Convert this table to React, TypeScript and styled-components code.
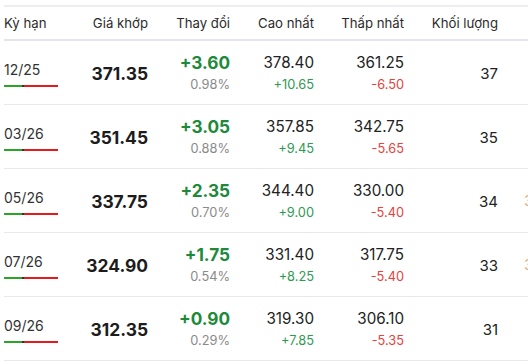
import styled, { createGlobalStyle } from "styled-components";

type Row = {
  term: string;
  price: string;
  change: string;
  pct: string;
  high: string;
  highDiff: string;
  low: string;
  lowDiff: string;
  volume: string;
  extra?: string;
};

const rows: Row[] = [
  { term: "12/25", price: "371.35", change: "+3.60", pct: "0.98%", high: "378.40", highDiff: "+10.65", low: "361.25", lowDiff: "-6.50", volume: "37" },
  { term: "03/26", price: "351.45", change: "+3.05", pct: "0.88%", high: "357.85", highDiff: "+9.45", low: "342.75", lowDiff: "-5.65", volume: "35" },
  { term: "05/26", price: "337.75", change: "+2.35", pct: "0.70%", high: "344.40", highDiff: "+9.00", low: "330.00", lowDiff: "-5.40", volume: "34", extra: "3" },
  { term: "07/26", price: "324.90", change: "+1.75", pct: "0.54%", high: "331.40", highDiff: "+8.25", low: "317.75", lowDiff: "-5.40", volume: "33", extra: "3" },
  { term: "09/26", price: "312.35", change: "+0.90", pct: "0.29%", high: "319.30", highDiff: "+7.85", low: "306.10", lowDiff: "-5.35", volume: "31" },
];

const GlobalStyle = createGlobalStyle`
  html, body {
    margin: 0;
    padding: 0;
    background: #ffffff;
    overflow: hidden;
  }
  body {
    font-family: Inter, "Noto Sans", sans-serif;
    color: #222;
  }
`;

const App = () => {
  return (
    <>
      <GlobalStyle />
      <Viewport>
        <Table>
          <HeadRow>
            <HeadCell $align="left">Kỳ hạn</HeadCell>
            <HeadCell>Giá khớp</HeadCell>
            <HeadCell>Thay đổi</HeadCell>
            <HeadCell>Cao nhất</HeadCell>
            <HeadCell>Thấp nhất</HeadCell>
            <HeadCell>Khối lượng</HeadCell>
            <HeadCell />
          </HeadRow>
          {rows.map((r) => (
            <BodyRow key={r.term}>
              <TermCell>
                <Term>{r.term}</Term>
                <RangeBar>
                  <BarPart $color="#2aa52a" $width={18} />
                  <BarPart $color="#333" $width={2} />
                  <BarPart $color="#e41b1b" $width={34} />
                </RangeBar>
              </TermCell>
              <Price>{r.price}</Price>
              <Stack>
                <Change>{r.change}</Change>
                <Percent>{r.pct}</Percent>
              </Stack>
              <Stack>
                <Level>{r.high}</Level>
                <Diff $up>{r.highDiff}</Diff>
              </Stack>
              <Stack>
                <Level>{r.low}</Level>
                <Diff>{r.lowDiff}</Diff>
              </Stack>
              <Volume>{r.volume}</Volume>
              <Extra>{r.extra}</Extra>
            </BodyRow>
          ))}
        </Table>
      </Viewport>
    </>
  );
};
export default App;

const Viewport = styled.div`
  width: 528px;
  height: 364px;
  overflow: hidden;
  padding: 5px 0 0 4px;
  box-sizing: border-box;
`;

const Table = styled.div`
  width: 600px;
  display: flex;
  flex-direction: column;
`;

const columns = "60px 84px 82px 84px 90px 94px 1fr";

const HeadRow = styled.div`
  display: grid;
  grid-template-columns: ${columns};
  height: 36px;
  align-items: center;
  border-top: 2px solid #eceef2;
  border-bottom: 2px solid #e3e5ea;
  box-sizing: border-box;
`;

const HeadCell = styled.div<{ $align?: "left" | "right" }>`
  text-align: ${(p) => p.$align ?? "right"};
  font-size: 13.2px;
  font-weight: 400;
  color: #2b2b2b;
  white-space: nowrap;
`;

const BodyRow = styled.div`
  display: grid;
  grid-template-columns: ${columns};
  height: 64px;
  align-items: center;
  border-bottom: 1px solid #e6e8ee;
  box-sizing: border-box;
`;

const TermCell = styled.div`
  display: flex;
  flex-direction: column;
  align-items: flex-start;
  padding-top: 2px;
`;

const Term = styled.div`
  font-size: 14px;
  line-height: 18px;
  color: #333;
`;

const RangeBar = styled.div`
  display: flex;
  margin-top: 6px;
  height: 2px;
`;

const BarPart = styled.div<{ $color: string; $width: number }>`
  width: ${(p) => p.$width}px;
  height: 2px;
  background: ${(p) => p.$color};
`;

const Price = styled.div`
  text-align: right;
  font-size: 17.4px;
  font-weight: 700;
  color: #1c1c1c;
  padding-top: 2px;
`;

const Stack = styled.div`
  display: flex;
  flex-direction: column;
  align-items: flex-end;
  gap: 3px;
`;

const Change = styled.div`
  font-size: 17.2px;
  font-weight: 700;
  line-height: 21px;
  color: #1d8a3a;
`;

const Percent = styled.div`
  font-size: 12.8px;
  line-height: 18px;
  color: #8a8a8a;
`;

const Level = styled.div`
  font-size: 15.2px;
  line-height: 21px;
  color: #222;
`;

const Diff = styled.div<{ $up?: boolean }>`
  font-size: 12.8px;
  line-height: 18px;
  color: ${(p) => (p.$up ? "#2e9a52" : "#e8413c")};
`;

const Volume = styled.div`
  text-align: right;
  font-size: 15px;
  color: #222;
  padding-top: 2px;
`;

const Extra = styled.div`
  padding-left: 26px;
  font-size: 15px;
  color: #e6b080;
`;
